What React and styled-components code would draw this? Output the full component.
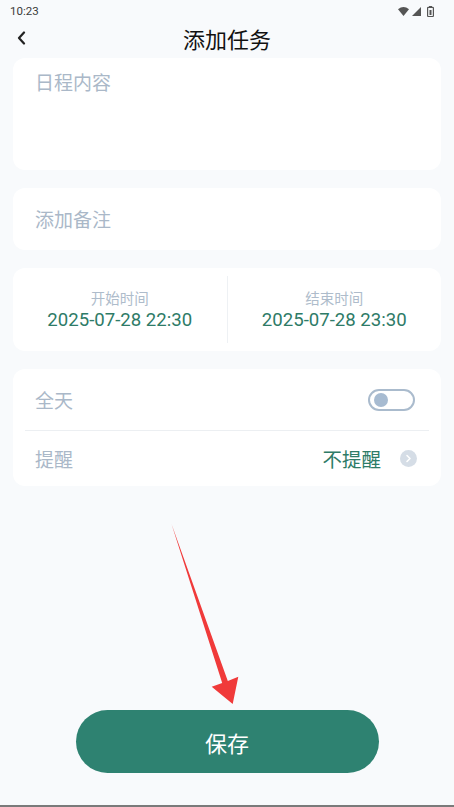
import React from 'react'
import styled, { createGlobalStyle } from 'styled-components'

const GlobalStyle = createGlobalStyle`
  html, body {
    margin: 0;
    padding: 0;
    background: #f8fafc;
  }
  * { box-sizing: border-box; }
`

const Page = styled.div`
  position: relative;
  height: 807px;
  display: flex;
  flex-direction: column;
  background: #f8fafc;
  font-family: Roboto, "Noto Sans CJK SC", sans-serif;
  overflow: hidden;
`

const StatusBar = styled.div`
  height: 22px;
  display: flex;
  align-items: center;
  justify-content: space-between;
  padding: 0 20px 0 10px;
  font-size: 11.5px;
  color: #3a3a3a;
`

const StatusIcons = styled.div`
  display: flex;
  align-items: center;
  gap: 3px;
`

const Header = styled.div`
  height: 32px;
  display: flex;
  align-items: center;
  justify-content: center;
  position: relative;
`

const BackButton = styled.button`
  position: absolute;
  left: 12px;
  top: 5px;
  width: 20px;
  height: 22px;
  border: none;
  background: none;
  padding: 0;
  display: flex;
  align-items: center;
  justify-content: center;
`

const Title = styled.h1`
  margin: 0;
  font-size: 22px;
  font-weight: 400;
  color: #111;
  font-family: "Noto Sans CJK SC", sans-serif;
  line-height: 32px;
`

const Content = styled.div`
  display: flex;
  flex-direction: column;
  gap: 18px;
  padding: 4px 13px 0;
`

const Card = styled.div`
  background: #fff;
  border-radius: 12px;
  height: ${p => p.h}px;
`

const Placeholder = styled.div`
  font-family: "Noto Sans CJK SC", sans-serif;
  font-size: 19px;
  line-height: 24px;
  color: #aab8c8;
  padding: ${p => (p.center ? '0 22px' : '12px 22px')};
  height: ${p => (p.center ? '100%' : 'auto')};
  display: flex;
  align-items: center;
`

const TimeCard = styled(Card)`
  display: grid;
  grid-template-columns: 1fr 1px 1fr;
  align-items: center;
  padding: 8px 0;
`

const TimeCol = styled.div`
  display: flex;
  flex-direction: column;
  align-items: center;
`

const VDivider = styled.div`
  width: 1px;
  height: 100%;
  background: #eef1f4;
`

const TimeLabel = styled.div`
  font-family: "Noto Sans CJK SC", sans-serif;
  font-size: 14.5px;
  line-height: 20px;
  color: #aebccb;
`

const TimeValue = styled.div`
  font-family: Roboto, sans-serif;
  font-size: 18.6px;
  line-height: 24px;
  color: #2e7b67;
`

const ListCard = styled(Card)`
  padding: 0 12px;
  display: flex;
  flex-direction: column;
`

const Row = styled.div`
  height: ${p => p.h}px;
  display: flex;
  align-items: center;
  justify-content: space-between;
  padding: 0 12px 0 10px;
  border-bottom: ${p => (p.divider ? '1.5px solid #eceff2' : 'none')};
`

const RowLabel = styled.span`
  font-family: "Noto Sans CJK SC", sans-serif;
  font-size: 19px;
  color: #aab8c8;
`

const RowRight = styled.div`
  display: flex;
  align-items: center;
  gap: 19px;
`

const RowValue = styled.span`
  font-family: "Noto Sans CJK SC", sans-serif;
  font-size: 19.5px;
  color: #2e7b67;
`

const Toggle = styled.div`
  width: 47px;
  height: 22px;
  border: 2px solid #aabbcd;
  border-radius: 11px;
  display: flex;
  align-items: center;
  padding-left: 4px;
  margin-right: 2px;

  &::before {
    content: '';
    width: 14px;
    height: 14px;
    border-radius: 50%;
    background: #a7bbd1;
  }
`

const ChevronDot = styled.span`
  width: 17px;
  height: 17px;
  border-radius: 50%;
  background: #d5dde6;
  display: flex;
  align-items: center;
  justify-content: center;
`

const Spacer = styled.div`
  flex: 1;
`

const SaveButton = styled.button`
  align-self: center;
  width: 303px;
  height: 63px;
  border: none;
  border-radius: 32px;
  background: #2e8271;
  color: #fff;
  font-family: "Noto Sans CJK SC", sans-serif;
  font-size: 22px;
  margin-bottom: 32px;
`

const NavLine = styled.div`
  height: 2px;
  background: #7a7a7a;
`

const Annotation = styled.svg`
  position: absolute;
  left: 0;
  top: 0;
  pointer-events: none;
`

export default function App () {
  return (
    <Page>
      <GlobalStyle />
      <StatusBar>
        <span>10:23</span>
        <StatusIcons>
          <svg width='11' height='9' viewBox='0 0 11 9'>
            <path d='M0 2.2 Q5.5 -2 11 2.2 L5.5 9 Z' fill='#555' />
          </svg>
          <svg width='9' height='9' viewBox='0 0 9 9'>
            <path d='M9 0 L9 9 L0 9 Z' fill='#555' />
          </svg>
          <svg width='7' height='11' viewBox='0 0 7 11' style={{ marginLeft: 3 }}>
            <rect x='2' y='0' width='3' height='1.5' fill='#555' />
            <rect x='0.6' y='1.3' width='5.8' height='9.2' rx='0.8' fill='none' stroke='#555' strokeWidth='1.2' />
            <rect x='2.5' y='4' width='2' height='5' fill='#555' />
          </svg>
        </StatusIcons>
      </StatusBar>

      <Header>
        <BackButton aria-label='back'>
          <svg width='10' height='14' viewBox='0 0 10 14'>
            <polyline points='7,1.5 2,7 7,12.5' fill='none' stroke='#222' strokeWidth='2.2' strokeLinecap='round' strokeLinejoin='round' />
          </svg>
        </BackButton>
        <Title>添加任务</Title>
      </Header>

      <Content>
        <Card h={112}>
          <Placeholder>日程内容</Placeholder>
        </Card>
        <Card h={62}>
          <Placeholder center>添加备注</Placeholder>
        </Card>
        <TimeCard h={83}>
          <TimeCol>
            <TimeLabel>开始时间</TimeLabel>
            <TimeValue>2025-07-28 22:30</TimeValue>
          </TimeCol>
          <VDivider />
          <TimeCol>
            <TimeLabel>结束时间</TimeLabel>
            <TimeValue>2025-07-28 23:30</TimeValue>
          </TimeCol>
        </TimeCard>
        <ListCard h={117}>
          <Row h={62} divider>
            <RowLabel>全天</RowLabel>
            <Toggle />
          </Row>
          <Row h={55}>
            <RowLabel>提醒</RowLabel>
            <RowRight>
              <RowValue>不提醒</RowValue>
              <ChevronDot>
                <svg width='7' height='9' viewBox='0 0 7 9'>
                  <polyline points='2,1.5 5,4.5 2,7.5' fill='none' stroke='#fff' strokeWidth='1.6' strokeLinecap='round' strokeLinejoin='round' />
                </svg>
              </ChevronDot>
            </RowRight>
          </Row>
        </ListCard>
      </Content>

      <Spacer />
      <SaveButton>保存</SaveButton>
      <NavLine />

      <Annotation width='454' height='807' viewBox='0 0 454 807'>
        <polygon points='171.5,524 227.8,681 238.3,676.7 232.7,704 211.7,686.7 222.2,683' fill='#f03a3a' />
      </Annotation>
    </Page>
  )
}
